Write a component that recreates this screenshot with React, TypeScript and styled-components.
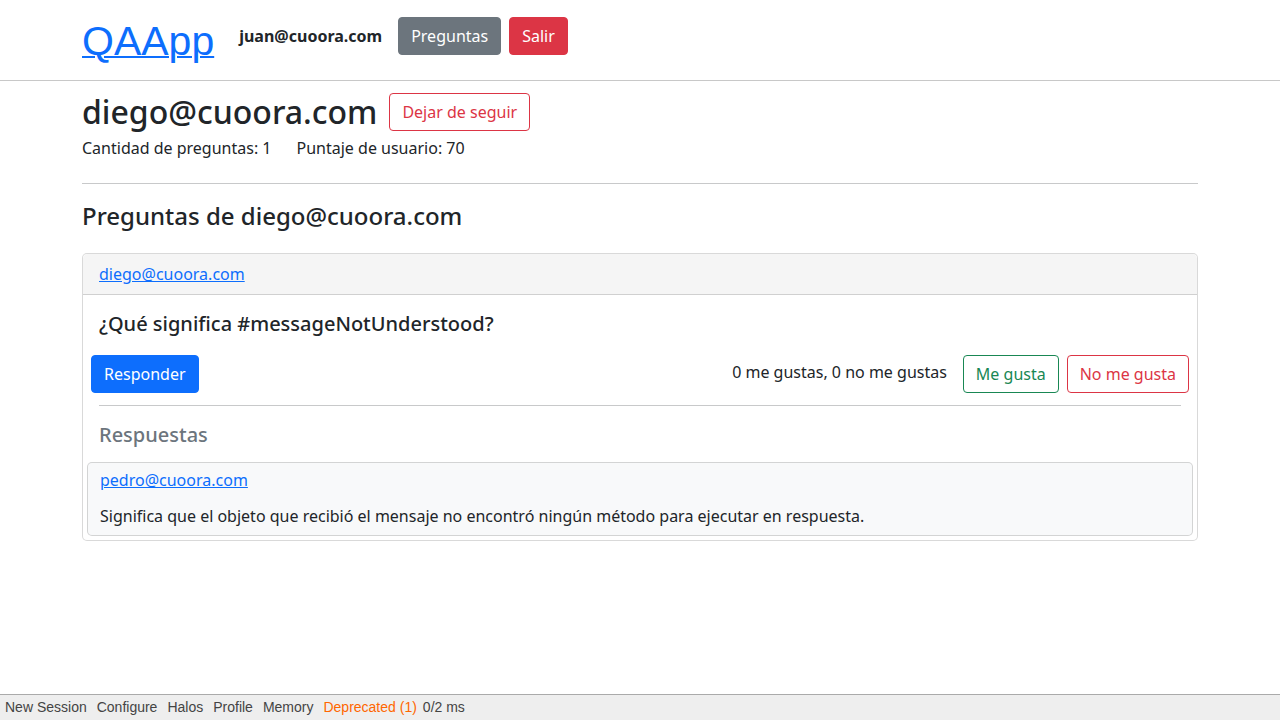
import styled, { createGlobalStyle } from 'styled-components';

const GlobalStyle = createGlobalStyle`
    html, body {
        margin: 0;
        padding: 0;
    }
    body {
        font-family: "Noto Sans", "Liberation Sans", sans-serif;
        font-size: 16px;
        line-height: 1.5;
        color: #212529;
        background: #fff;
    }
    * {
        box-sizing: border-box;
    }
`;

type Variant = 'secondary' | 'danger' | 'primary' | 'outline-danger' | 'outline-success';

const variants: Record<Variant, string> = {
    secondary: 'background:#6c757d;border-color:#6c757d;color:#fff;',
    danger: 'background:#dc3545;border-color:#dc3545;color:#fff;',
    primary: 'background:#0d6efd;border-color:#0d6efd;color:#fff;',
    'outline-danger': 'background:transparent;border-color:#dc3545;color:#dc3545;',
    'outline-success': 'background:transparent;border-color:#198754;color:#198754;',
};

const Button = styled.button<{ $variant: Variant }>`
    font-family: "Noto Sans", sans-serif;
    font-size: 16px;
    line-height: 24px;
    padding: 6px 12px;
    border: 1px solid;
    border-radius: 4px;
    cursor: pointer;
    ${p => variants[p.$variant]}
`;

const Page = styled.div`
    display: flex;
    flex-direction: column;
    height: 100vh;
`;

const Main = styled.div`
    flex: 1;
`;

const Header = styled.header`
    height: 81px;
    border-bottom: 1px solid #c8c8c8;
`;

const Container = styled.div`
    width: 1140px;
    margin: 0 auto;
    padding: 0 12px;
`;

const Nav = styled(Container)`
    display: flex;
    align-items: center;
    height: 100%;
    padding-bottom: 8px;
`;

const Brand = styled.a`
    font-family: "Liberation Sans", Arial, sans-serif;
    font-size: 41px;
    line-height: 48px;
    color: #0d6efd;
    text-decoration: underline;
    text-decoration-thickness: 2px;
    margin-top: 10px;
    margin-right: 25px;
`;

const UserName = styled.span`
    font-weight: 700;
    margin-right: 16px;
`;

const NavButtons = styled.div`
    display: flex;
    gap: 8px;
`;

const ProfileHead = styled.div`
    display: flex;
    align-items: center;
    gap: 12px;
    margin-top: 12px;
`;

const Title = styled.h2`
    font-size: 32px;
    font-weight: 500;
    line-height: 38px;
    margin: 0;
`;

const Stats = styled.div`
    display: flex;
    gap: 25px;
    margin-top: 5px;
`;

const Rule = styled.hr<{ $inset?: number }>`
    border: none;
    border-top: 1px solid #c8c9ca;
    margin: 0 ${p => p.$inset ?? 0}px;
`;

const Divider = styled(Rule)`
    margin-top: 23px;
`;

const SectionTitle = styled.h4`
    font-size: 24px;
    font-weight: 500;
    line-height: 29px;
    margin: 17px 0 23px;
`;

const Card = styled.div<{ $muted?: boolean }>`
    border: 1px solid rgba(0, 0, 0, 0.15);
    border-radius: 5px;
    background: ${p => (p.$muted ? '#f8f9fa' : '#fff')};
`;

const CardHeader = styled.div`
    background: #f5f5f5;
    border-bottom: 1px solid rgba(0, 0, 0, 0.15);
    padding: 8px 16px;
    border-radius: 5px 5px 0 0;
`;

const Link = styled.a`
    color: #0d6efd;
    text-decoration: underline;
`;

const Question = styled.h5`
    font-size: 20px;
    font-weight: 500;
    line-height: 24px;
    margin: 0;
    padding: 17px 16px 0;
`;

const Actions = styled.div`
    display: flex;
    align-items: center;
    justify-content: space-between;
    padding: 19px 8px 12px;
`;

const Votes = styled.div`
    display: flex;
    align-items: center;
    gap: 8px;
`;

const VoteCount = styled.span`
    margin-right: 8px;
    margin-top: -4px;
`;

const AnswersTitle = styled.h5`
    font-size: 20px;
    font-weight: 500;
    line-height: 24px;
    color: #6c757d;
    margin: 0;
    padding: 17px 16px 15px;
`;

const AnswerList = styled.div`
    padding: 0 4px 4px;
`;

const AnswerBody = styled.div`
    padding: 5px 12px 7px;
    display: flex;
    flex-direction: column;
    gap: 12px;
`;

const Toolbar = styled.div`
    display: flex;
    align-items: center;
    gap: 10px;
    height: 26px;
    padding: 0 5px 1px;
    background: #eee;
    border-top: 1px solid #aaa;
    font-family: "Liberation Sans", Arial, sans-serif;
    font-size: 14px;
    color: #444;
`;

const ToolItem = styled.span<{ $warn?: boolean; $tight?: boolean }>`
    color: ${p => (p.$warn ? '#f60' : '#444')};
    margin-left: ${p => (p.$tight ? '-4px' : '0')};
`;

const App = () => {
    return (
        <Page>
            <GlobalStyle />
            <Main>
                <Header>
                    <Nav>
                        <Brand href="#">QAApp</Brand>
                        <UserName>juan@cuoora.com</UserName>
                        <NavButtons>
                            <Button $variant="secondary">Preguntas</Button>
                            <Button $variant="danger">Salir</Button>
                        </NavButtons>
                    </Nav>
                </Header>
                <Container>
                    <ProfileHead>
                        <Title>diego@cuoora.com</Title>
                        <Button $variant="outline-danger">Dejar de seguir</Button>
                    </ProfileHead>
                    <Stats>
                        <span>Cantidad de preguntas: 1</span>
                        <span>Puntaje de usuario: 70</span>
                    </Stats>
                    <Divider />
                    <SectionTitle>Preguntas de diego@cuoora.com</SectionTitle>
                    <Card>
                        <CardHeader>
                            <Link href="#">diego@cuoora.com</Link>
                        </CardHeader>
                        <Question>¿Qué significa #messageNotUnderstood?</Question>
                        <Actions>
                            <Button $variant="primary">Responder</Button>
                            <Votes>
                                <VoteCount>0 me gustas, 0 no me gustas</VoteCount>
                                <Button $variant="outline-success">Me gusta</Button>
                                <Button $variant="outline-danger">No me gusta</Button>
                            </Votes>
                        </Actions>
                        <Rule $inset={16} />
                        <AnswersTitle>Respuestas</AnswersTitle>
                        <AnswerList>
                            <Card $muted>
                                <AnswerBody>
                                    <Link href="#">pedro@cuoora.com</Link>
                                    <span>Significa que el objeto que recibió el mensaje no encontró ningún método para ejecutar en respuesta.</span>
                                </AnswerBody>
                            </Card>
                        </AnswerList>
                    </Card>
                </Container>
            </Main>
            <Toolbar>
                <ToolItem>New Session</ToolItem>
                <ToolItem>Configure</ToolItem>
                <ToolItem>Halos</ToolItem>
                <ToolItem>Profile</ToolItem>
                <ToolItem>Memory</ToolItem>
                <ToolItem $warn>Deprecated (1)</ToolItem>
                <ToolItem $tight>0/2 ms</ToolItem>
            </Toolbar>
        </Page>
    );
};

export default App;
